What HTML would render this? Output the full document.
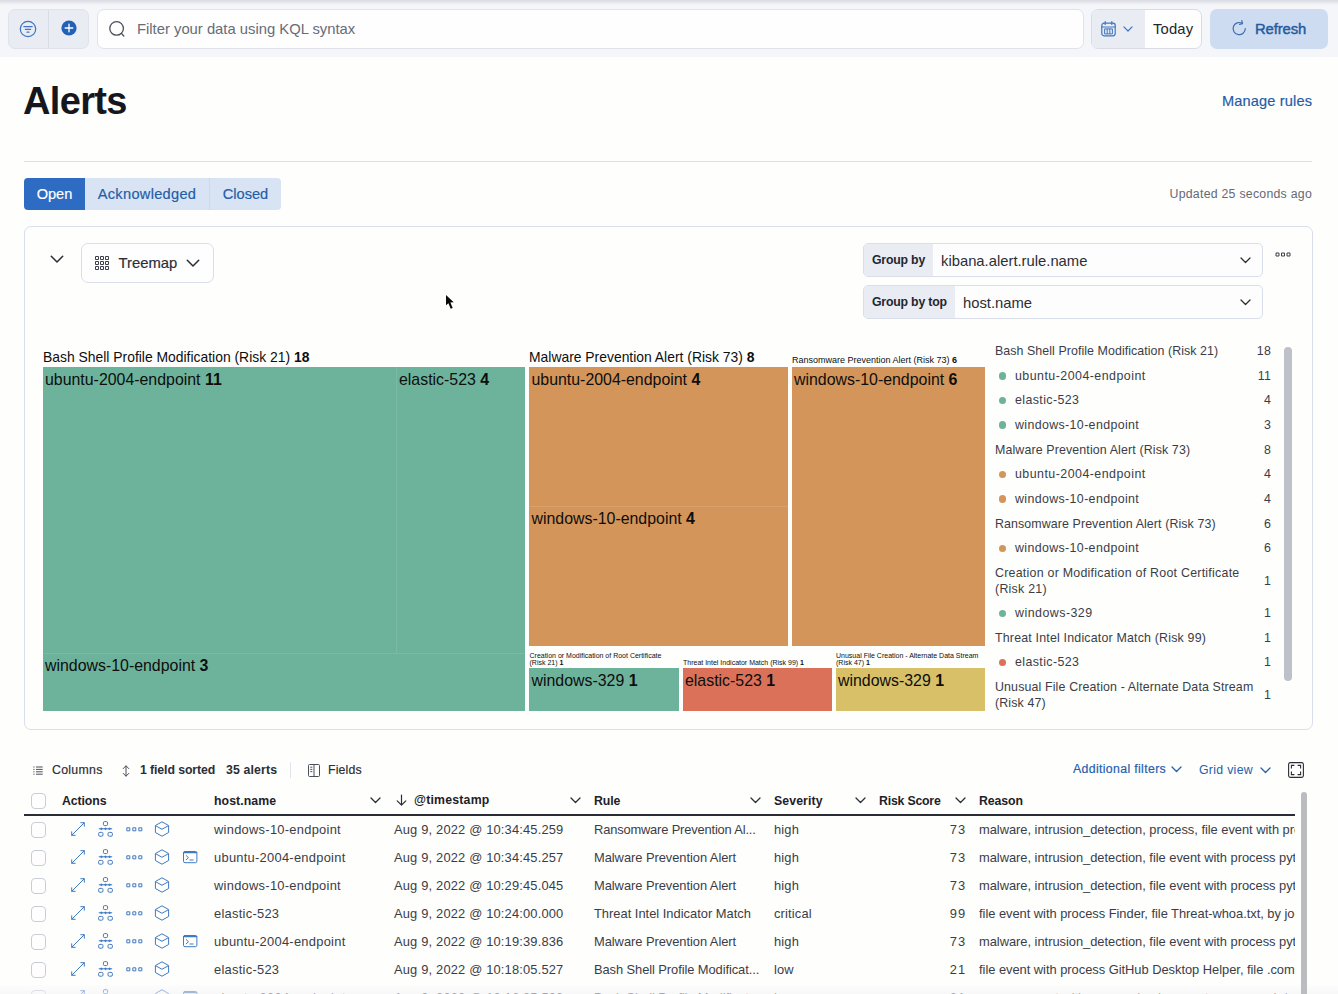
<!DOCTYPE html>
<html lang="en">
<head>
<meta charset="utf-8">
<title>Alerts</title>
<style>
*{box-sizing:border-box;margin:0;padding:0}
html,body{width:1338px;height:994px;overflow:hidden;background:#fefefd}
body{font-family:"Liberation Sans",Arial,sans-serif;color:#343741;position:relative;font-size:13px}
.a{position:absolute;white-space:nowrap}
svg{position:absolute;overflow:visible}
b{font-weight:bold}
#topbar{left:0;top:0;width:1338px;height:57px;background:#f5f6fa}
#topshadow{left:0;top:0;width:1338px;height:5px;background:linear-gradient(#d9dae2,#f5f6fa)}
.btngrp{left:8px;top:9px;width:81px;height:40px;background:#e9ecf2;border:1px solid #dfe3ec;border-radius:7px}
#search{left:97px;top:9px;width:986.5px;height:40px;background:#fefefe;border:1px solid #dfe3ec;border-radius:7px}
#date{left:1091px;top:9px;width:111px;height:40px;background:#fefefe;border:1px solid #d7dce7;border-radius:7px;overflow:hidden}
#date .l{left:0;top:0;width:52.5px;height:40px;background:#e9ecf2}
#refresh{left:1210px;top:9px;width:118px;height:40px;background:#cddcf1;border-radius:7px}
h1{font-size:38px;font-weight:bold;color:#16171c;letter-spacing:-.65px}
.blue{color:#1f5ca8}
.hr{background:#dadfe9;height:1px}
.tab{top:178px;height:32px;line-height:32px;font-size:14.6px;text-align:center;background:#d8e4f4;color:#235da6}
#panel{left:24px;top:226px;width:1289px;height:504px;border:1px solid #d9deea;border-radius:7px;background:#fefefd}
.med{-webkit-text-stroke:.18px currentColor}
.gb{width:400px;height:34px;border:1px solid #d9deea;border-radius:5px;background:#fdfdfe;overflow:hidden}
.gb .lab{left:0;top:0;height:32px;line-height:32.5px;background:#e9ecf2;font-size:12.3px;font-weight:bold;color:#24262d;padding-left:8px;letter-spacing:-.2px}
.gb .val{top:0;line-height:35px;font-size:14.8px;color:#2b2e36;letter-spacing:0}
.tg{font-size:13.9px;color:#0e0e0e;line-height:18px}
.tl{font-size:15.9px;color:#0e0e0e;line-height:20px}
.ts{font-size:7px;color:#0e0e0e;line-height:7px}
.lg{left:995px;width:277px;font-size:12.4px;line-height:15.7px;color:#3a3d47;letter-spacing:.22px}
.lg i{position:absolute;right:1px;top:0;font-style:normal;letter-spacing:.22px}
.lg.s{padding-left:20px}
.lg u{position:absolute;left:3.7px;top:3.5px;width:7.6px;height:7.6px;border-radius:50%}
.tb{top:763px;font-size:12.3px;color:#2b2e36;line-height:15px}
.th{font-size:12.3px;font-weight:bold;color:#1f2128;line-height:15px;letter-spacing:-.1px}
.cb{left:30.5px;width:15.5px;height:16px;border:1px solid #c9cdd8;border-radius:4px;background:#fefefe}
.td{font-size:12.9px;line-height:27px;color:#3a3d47;letter-spacing:.16px}
</style>
</head>
<body>
<div class="a" id="topbar"></div><div class="a" id="topshadow"></div><div class="a btngrp"></div>
<div class="a" style="left:48px;top:10px;width:1px;height:38px;background:#d9dde7"></div>
<svg style="left:19px;top:20px" width="18" height="18" viewBox="0 0 18 18" fill="none" stroke="#3f76bf" stroke-width="1.2" stroke-linecap="round"><circle cx="9" cy="9" r="7.7"/><path d="M4.8 6.600h8.400M6.400 9.400h5.200M8 12.200h2"/></svg>
<svg style="left:60.500px;top:20px" width="16" height="16" viewBox="0 0 16 16"><circle cx="8" cy="8" r="7.600" fill="#2261b8"/><path d="M8 4.200v7.600M4.200 8h7.600" stroke="#fff" stroke-width="1.300" stroke-linecap="round"/></svg>
<div class="a" id="search"></div>
<svg style="left:107.700px;top:19.500px" width="18" height="18" viewBox="0 0 18 18" fill="none" stroke="#4a4f5a" stroke-width="1.300" stroke-linecap="round"><circle cx="8.600" cy="8.400" r="6.800"/><path d="M13.400 13.400l2.400 2.600"/></svg>
<div class="a" style="left:137px;top:21px;font-size:14.8px;color:#666c78;letter-spacing:0">Filter your data using KQL syntax</div>
<div class="a" id="date"><div class="a l"></div></div>
<svg style="left:1101px;top:21px" width="15" height="16" viewBox="0 0 15 16" fill="none" stroke="#3f76bf" stroke-width="1.200"><rect x=".8" y="2.200" width="13.400" height="12.600" rx="2.200"/><path d="M.8 6h13.400M4.200 .6v2.800M10.800 .6v2.800" stroke-linecap="round"/><path d="M3.600 7.900h7.800v5H3.600zM6.200 7.900v5M8.800 7.900v5" stroke-width="1"/></svg>
<svg style="left:1123px;top:26px" width="10" height="6.4" viewBox="0 0 11 7" fill="none" stroke="#3f76bf" stroke-width="1.3" stroke-linecap="round" stroke-linejoin="round"><path d="M1 1l4.5 4.500L10 1"/></svg>
<div class="a" style="left:1153px;top:21px;font-size:14.8px;color:#24262d;letter-spacing:.15px">Today</div>
<div class="a" id="refresh"></div>
<svg style="left:1232px;top:20px" width="15" height="16" viewBox="0 0 15 16" fill="none" stroke="#3e6fae" stroke-width="1.200" stroke-linecap="round" stroke-linejoin="round"><path d="M13.300 8.600a6.100 6.100 0 1 1-3.100-5.300"/><path d="M9.800 .6l.7 3-3 .7"/></svg>
<div class="a" style="left:1255px;top:21px;font-size:14.8px;-webkit-text-stroke:.45px #255b9f;letter-spacing:-.1px;color:#255b9f">Refresh</div>
<h1 class="a" style="left:23px;top:80px">Alerts</h1>
<div class="a blue med" style="left:1222px;top:93px;font-size:14.6px;letter-spacing:.15px">Manage rules</div>
<div class="a hr" style="left:24px;top:161px;width:1288px"></div>
<div class="a tab med" style="left:24px;width:61px;background:#2d6cc2;color:#fff;border-radius:4px 0 0 4px">Open</div>
<div class="a tab med" style="left:85px;width:125px;border-right:1px solid #cbd9ee;letter-spacing:.3px">Acknowledged</div>
<div class="a tab med" style="left:210px;width:71px;border-radius:0 4px 4px 0">Closed</div>
<div class="a" style="right:26px;top:187px;font-size:12.3px;color:#646a76;letter-spacing:.26px">Updated 25 seconds ago</div>
<div class="a" id="panel"></div>
<svg style="left:50px;top:255px" width="14" height="8.9" viewBox="0 0 11 7" fill="none" stroke="#2a2d35" stroke-width="1.2" stroke-linecap="round" stroke-linejoin="round"><path d="M1 1l4.5 4.500L10 1"/></svg>
<div class="a" style="left:81px;top:243px;width:133px;height:40px;border:1px solid #d9deea;border-radius:7px;background:#fefefe"></div>
<svg style="left:95px;top:256px" width="14" height="14" viewBox="0 0 14 14" fill="none" stroke="#3c404a" stroke-width="1"><path d="M.5 .5h3v3h-3zM5.500 .5h3v3h-3zM10.500 .5h3v3h-3zM.5 5.500h3v3h-3zM5.500 5.500h3v3h-3zM10.500 5.500h3v3h-3zM.5 10.500h3v3h-3zM5.500 10.500h3v3h-3zM10.500 10.500h3v3h-3z"/></svg>
<div class="a med" style="left:118.500px;top:255px;font-size:14.8px;color:#2b2e36;letter-spacing:0">Treemap</div>
<svg style="left:186px;top:259px" width="14" height="8.9" viewBox="0 0 11 7" fill="none" stroke="#2a2d35" stroke-width="1.2" stroke-linecap="round" stroke-linejoin="round"><path d="M1 1l4.5 4.500L10 1"/></svg>
<div class="a gb" style="left:863px;top:243px"><div class="a lab" style="width:69px">Group by</div><div class="a val" style="left:77px">kibana.alert.rule.name</div></div>
<div class="a gb" style="left:863px;top:285px"><div class="a lab" style="width:91px">Group by top</div><div class="a val" style="left:99px">host.name</div></div>
<svg style="left:1240px;top:257px" width="11" height="7.0" viewBox="0 0 11 7" fill="none" stroke="#2a2d35" stroke-width="1.3" stroke-linecap="round" stroke-linejoin="round"><path d="M1 1l4.5 4.500L10 1"/></svg>
<svg style="left:1240px;top:299px" width="11" height="7.0" viewBox="0 0 11 7" fill="none" stroke="#2a2d35" stroke-width="1.3" stroke-linecap="round" stroke-linejoin="round"><path d="M1 1l4.5 4.500L10 1"/></svg>
<svg style="left:1275px;top:252px" width="16" height="6" viewBox="0 0 16 6" fill="none" stroke="#3c404a" stroke-width="1"><path d="M1 1h3v3H1zM6.500 1h3v3h-3zM12 1h3v3h-3z"/></svg>
<svg style="left:444px;top:292.800px" width="14" height="20" viewBox="0 0 14 20"><path d="M2 2v10.200l2.400-2 2.300 5.500 2-.8-2.300-5.400 3.300-.2z" fill="#0a0a0a" stroke="#fff" stroke-width="1.400" stroke-linejoin="round" paint-order="stroke"/></svg>
<div class="a" style="left:43px;top:367px;width:482.4px;height:344px;background:#6db39c"></div>
<div class="a" style="left:396px;top:367px;width:1px;height:286px;background:#7bbba6"></div>
<div class="a" style="left:43px;top:653px;width:482.4px;height:1px;background:#7bbba6"></div>
<div class="a" style="left:529.2px;top:367px;width:258.8px;height:279px;background:#d39559"></div>
<div class="a" style="left:529.2px;top:505.5px;width:258.8px;height:1px;background:#d9a26d"></div>
<div class="a" style="left:792px;top:367px;width:193px;height:279px;background:#d39559"></div>
<div class="a" style="left:529.2px;top:668.3px;width:149.6px;height:42.7px;background:#6db39c"></div>
<div class="a" style="left:682.8px;top:668.3px;width:149.2px;height:42.7px;background:#da7158"></div>
<div class="a" style="left:836px;top:668.3px;width:149px;height:42.7px;background:#d7c067"></div>
<div class="a tg" style="left:43px;top:348px">Bash Shell Profile Modification (Risk 21) <b>18</b></div>
<div class="a tg" style="left:529px;top:348px">Malware Prevention Alert (Risk 73) <b>8</b></div>
<div class="a tg" style="left:792px;top:351px;font-size:9px">Ransomware Prevention Alert (Risk 73) <b>6</b></div>
<div class="a tl" style="left:45px;top:369.8px">ubuntu-2004-endpoint <b>11</b></div>
<div class="a tl" style="left:399px;top:369.8px">elastic-523 <b>4</b></div>
<div class="a tl" style="left:45px;top:655.9px">windows-10-endpoint <b>3</b></div>
<div class="a tl" style="left:531.5px;top:369.8px">ubuntu-2004-endpoint <b>4</b></div>
<div class="a tl" style="left:531.5px;top:508.6px">windows-10-endpoint <b>4</b></div>
<div class="a tl" style="left:794px;top:369.8px">windows-10-endpoint <b>6</b></div>
<div class="a tl" style="left:531.5px;top:671.1px">windows-329 <b>1</b></div>
<div class="a tl" style="left:685px;top:671.1px">elastic-523 <b>1</b></div>
<div class="a tl" style="left:838px;top:671.1px">windows-329 <b>1</b></div>
<div class="a ts" style="left:529.5px;top:652.1px">Creation or Modification of Root Certificate<br>(Risk 21) <b>1</b></div>
<div class="a ts" style="left:683px;top:658.7px">Threat Intel Indicator Match (Risk 99) <b>1</b></div>
<div class="a ts" style="left:836px;top:652.1px">Unusual File Creation - Alternate Data Stream<br>(Risk 47) <b>1</b></div>
<div class="a lg" style="top:343.9px;letter-spacing:0.07px">Bash Shell Profile Modification (Risk 21)<i>18</i></div>
<div class="a lg s" style="top:368.9px;letter-spacing:0.47px"><u style="background:#6db39c"></u>ubuntu-2004-endpoint<i>11</i></div>
<div class="a lg s" style="top:393.4px;letter-spacing:0.4px"><u style="background:#6db39c"></u>elastic-523<i>4</i></div>
<div class="a lg s" style="top:417.9px;letter-spacing:0.37px"><u style="background:#6db39c"></u>windows-10-endpoint<i>3</i></div>
<div class="a lg" style="top:442.9px;letter-spacing:0.13px">Malware Prevention Alert (Risk 73)<i>8</i></div>
<div class="a lg s" style="top:467.4px;letter-spacing:0.47px"><u style="background:#d39559"></u>ubuntu-2004-endpoint<i>4</i></div>
<div class="a lg s" style="top:491.9px;letter-spacing:0.37px"><u style="background:#d39559"></u>windows-10-endpoint<i>4</i></div>
<div class="a lg" style="top:516.9px;letter-spacing:0.1px">Ransomware Prevention Alert (Risk 73)<i>6</i></div>
<div class="a lg s" style="top:541.4px;letter-spacing:0.37px"><u style="background:#d39559"></u>windows-10-endpoint<i>6</i></div>
<div class="a lg" style="top:565.9px;letter-spacing:0.25px">Creation or Modification of Root Certificate<br>(Risk 21)<i style="top:8px">1</i></div>
<div class="a lg s" style="top:606.4px;letter-spacing:0.48px"><u style="background:#6db39c"></u>windows-329<i>1</i></div>
<div class="a lg" style="top:630.9px;letter-spacing:0.19px">Threat Intel Indicator Match (Risk 99)<i>1</i></div>
<div class="a lg s" style="top:655.4px;letter-spacing:0.4px"><u style="background:#da7158"></u>elastic-523<i>1</i></div>
<div class="a lg" style="top:679.9px;letter-spacing:0.14px">Unusual File Creation - Alternate Data Stream<br>(Risk 47)<i style="top:8px">1</i></div>
<div class="a" style="left:1283.5px;top:347px;width:8px;height:334px;background:#bfc1c9;border-radius:4px"></div>
<svg style="left:33px;top:765.500px" width="10" height="9" viewBox="0 0 10 9" fill="none" stroke="#4a4f5a" stroke-width="1"><path d="M.3 1h1.200M.3 3.400h1.200M.3 5.800h1.200M.3 8.200h1.200M3 1h6.700M3 3.400h6.700M3 5.800h6.700M3 8.200h6.700"/></svg>
<div class="a tb med" style="left:52px;letter-spacing:.3px">Columns</div>
<svg style="left:122px;top:764.500px" width="8" height="12" viewBox="0 0 8 12" fill="none" stroke="#4a4f5a" stroke-width="1" stroke-linecap="round" stroke-linejoin="round"><path d="M4 1v10M1.200 3.600L4 .8l2.800 2.800M1.200 8.400L4 11.200l2.800-2.800"/></svg>
<div class="a tb" style="left:140px;font-weight:bold;letter-spacing:-.1px">1 field sorted</div>
<div class="a tb" style="left:226px;font-weight:bold;letter-spacing:.15px">35 alerts</div>
<div class="a" style="left:290px;top:762px;width:1px;height:16px;background:#e1e4ec"></div>
<svg style="left:308px;top:763.500px" width="12" height="13" viewBox="0 0 12 13" fill="none" stroke="#4a4f5a" stroke-width="1"><rect x=".5" y=".5" width="11" height="12" rx="1"/><path d="M6 .5v12M2.300 3.200h2M2.300 5.400h2M2.300 7.600h2"/></svg>
<div class="a tb med" style="left:328px;letter-spacing:.15px">Fields</div>
<div class="a tb med" style="left:1073px;top:762px;color:#2460ad;letter-spacing:.35px">Additional filters</div>
<svg style="left:1171px;top:766px" width="11" height="7.0" viewBox="0 0 11 7" fill="none" stroke="#2460ad" stroke-width="1.3" stroke-linecap="round" stroke-linejoin="round"><path d="M1 1l4.5 4.500L10 1"/></svg>
<div class="a tb" style="left:1199px;top:763px;color:#2460ad;letter-spacing:.3px">Grid view</div>
<svg style="left:1260px;top:766.5px" width="11" height="7.0" viewBox="0 0 11 7" fill="none" stroke="#2460ad" stroke-width="1.3" stroke-linecap="round" stroke-linejoin="round"><path d="M1 1l4.5 4.500L10 1"/></svg>
<svg style="left:1288px;top:762px" width="16" height="16" viewBox="0 0 16 16" fill="none" stroke="#2a2d35" stroke-width="1.100"><rect x=".6" y=".6" width="14.800" height="14.800" rx="1.800"/><path d="M3.400 6.400v-3h3M9.600 3.400h3v3M12.600 9.600v3h-3M6.400 12.600h-3v-3"/></svg>
<div class="a cb" style="top:792.500px"></div>
<div class="a th" style="left:62px;top:793.5px;letter-spacing:-0.1px">Actions</div>
<div class="a th" style="left:214px;top:793.5px;letter-spacing:0.08px">host.name</div>
<div class="a th" style="left:414px;top:793px;letter-spacing:0.2px">@timestamp</div>
<div class="a th" style="left:594px;top:793.5px;letter-spacing:-0.1px">Rule</div>
<div class="a th" style="left:774px;top:793.5px;letter-spacing:0.1px">Severity</div>
<div class="a th" style="left:879px;top:793.5px;letter-spacing:-0.2px">Risk Score</div>
<div class="a th" style="left:979px;top:793.5px;letter-spacing:-0.1px">Reason</div>
<svg style="left:370px;top:797px" width="11" height="7.0" viewBox="0 0 11 7" fill="none" stroke="#2a2d35" stroke-width="1.3" stroke-linecap="round" stroke-linejoin="round"><path d="M1 1l4.5 4.500L10 1"/></svg>
<svg style="left:570px;top:797px" width="11" height="7.0" viewBox="0 0 11 7" fill="none" stroke="#2a2d35" stroke-width="1.3" stroke-linecap="round" stroke-linejoin="round"><path d="M1 1l4.5 4.500L10 1"/></svg>
<svg style="left:750px;top:797px" width="11" height="7.0" viewBox="0 0 11 7" fill="none" stroke="#2a2d35" stroke-width="1.3" stroke-linecap="round" stroke-linejoin="round"><path d="M1 1l4.5 4.500L10 1"/></svg>
<svg style="left:855px;top:797px" width="11" height="7.0" viewBox="0 0 11 7" fill="none" stroke="#2a2d35" stroke-width="1.3" stroke-linecap="round" stroke-linejoin="round"><path d="M1 1l4.5 4.500L10 1"/></svg>
<svg style="left:955px;top:797px" width="11" height="7.0" viewBox="0 0 11 7" fill="none" stroke="#2a2d35" stroke-width="1.3" stroke-linecap="round" stroke-linejoin="round"><path d="M1 1l4.5 4.500L10 1"/></svg>
<svg style="left:396px;top:794px" width="11" height="12" viewBox="0 0 11 12" fill="none" stroke="#2a2d35" stroke-width="1.200" stroke-linecap="round" stroke-linejoin="round"><path d="M5.500 1v10M1.200 6.800l4.300 4.300 4.300-4.300"/></svg>
<div class="a" style="left:24px;top:814px;width:1271px;height:2px;background:#2b2d36"></div>
<div class="a" style="left:24px;top:816px;width:1271px;height:178px;overflow:hidden">
<div class="a cb" style="left:6.500px;top:6px"></div>
<svg style="left:46.800px;top:6px" width="14" height="14" viewBox="0 0 14 14" fill="none" stroke="#4079c1" stroke-width="1" stroke-linecap="round" stroke-linejoin="round"><path d="M.8 13.200L13.200 .8M9.800 .7h3.500v3.500M.7 9.800v3.500h3.500"/></svg>
<svg style="left:73.800px;top:4.8px" width="15" height="16" viewBox="0 0 15 16" fill="none" stroke="#4079c1" stroke-width="1"><rect x="5.400" y=".6" width="4.200" height="4" rx="1.300"/><path d="M.8 7.800h13.400"/><path d="M3.400 6.700l1.100 1.100-1.100 1.100-1.100-1.100zM7.500 6.700l1.100 1.100-1.100 1.100-1.100-1.100zM11.600 6.700l1.100 1.100-1.100 1.100-1.100-1.100z" fill="#4079c1" stroke-width=".6"/><rect x=".6" y="11.400" width="4.400" height="3.800" rx="1.300"/><rect x="10" y="11.400" width="4.400" height="3.800" rx="1.300"/></svg>
<svg style="left:101.800px;top:11.3px" width="17" height="5" viewBox="0 0 17 5" fill="none" stroke="#4079c1" stroke-width="1"><path d="M.8 .8h3v3H.8zM6.800 .8h3v3H6.800zM12.800 .8h3v3H12.800z"/></svg>
<svg style="left:130px;top:5px" width="16" height="16" viewBox="0 0 16 16" fill="none" stroke="#4079c1" stroke-width="1" stroke-linejoin="round"><path d="M8 .8l6.600 3.700v7L8 15.200 1.400 11.500v-7z"/><path d="M1.600 4.700L8 8.300l6.400-3.600"/></svg>
<div class="a td" style="left:190px;top:0px;letter-spacing:.27px">windows-10-endpoint</div>
<div class="a td" style="left:370px;top:0px;letter-spacing:.17px">Aug 9, 2022 @ 10:34:45.259</div>
<div class="a td" style="left:570px;top:0px;letter-spacing:-0.17px">Ransomware Prevention Al...</div>
<div class="a td" style="left:750px;top:0px">high</div>
<div class="a td" style="left:855px;top:0px;width:87px;text-align:right;letter-spacing:.9px">73</div>
<div class="a td" style="left:955px;top:0px;letter-spacing:-.03px">malware, intrusion_detection, process, file event with process mimikatz.exe, by user on windows-10-endpoint created high alert</div>
<div class="a cb" style="left:6.500px;top:34px"></div>
<svg style="left:46.800px;top:34px" width="14" height="14" viewBox="0 0 14 14" fill="none" stroke="#4079c1" stroke-width="1" stroke-linecap="round" stroke-linejoin="round"><path d="M.8 13.200L13.200 .8M9.800 .7h3.500v3.500M.7 9.800v3.500h3.500"/></svg>
<svg style="left:73.800px;top:32.8px" width="15" height="16" viewBox="0 0 15 16" fill="none" stroke="#4079c1" stroke-width="1"><rect x="5.400" y=".6" width="4.200" height="4" rx="1.300"/><path d="M.8 7.800h13.400"/><path d="M3.400 6.700l1.100 1.100-1.100 1.100-1.100-1.100zM7.500 6.700l1.100 1.100-1.100 1.100-1.100-1.100zM11.600 6.700l1.100 1.100-1.100 1.100-1.100-1.100z" fill="#4079c1" stroke-width=".6"/><rect x=".6" y="11.400" width="4.400" height="3.800" rx="1.300"/><rect x="10" y="11.400" width="4.400" height="3.800" rx="1.300"/></svg>
<svg style="left:101.800px;top:39.3px" width="17" height="5" viewBox="0 0 17 5" fill="none" stroke="#4079c1" stroke-width="1"><path d="M.8 .8h3v3H.8zM6.800 .8h3v3H6.800zM12.800 .8h3v3H12.800z"/></svg>
<svg style="left:130px;top:33px" width="16" height="16" viewBox="0 0 16 16" fill="none" stroke="#4079c1" stroke-width="1" stroke-linejoin="round"><path d="M8 .8l6.600 3.700v7L8 15.200 1.400 11.500v-7z"/><path d="M1.600 4.700L8 8.300l6.400-3.600"/></svg>
<svg style="left:158.800px;top:35.4px" width="14.400" height="12.200" viewBox="0 0 14.400 12.200" fill="none" stroke="#4079c1" stroke-width="1" stroke-linecap="round" stroke-linejoin="round"><rect x=".5" y=".5" width="13.400" height="11.200" rx="1.500"/><path d="M.8 1.500h12.800" stroke-width="1.400"/><path d="M3.200 4.600l2.300 2.100-2.300 2.100M6.900 9h3.200"/></svg>
<div class="a td" style="left:190px;top:28px;letter-spacing:.27px">ubuntu-2004-endpoint</div>
<div class="a td" style="left:370px;top:28px;letter-spacing:.17px">Aug 9, 2022 @ 10:34:45.257</div>
<div class="a td" style="left:570px;top:28px;letter-spacing:-0.05px">Malware Prevention Alert</div>
<div class="a td" style="left:750px;top:28px">high</div>
<div class="a td" style="left:855px;top:28px;width:87px;text-align:right;letter-spacing:.9px">73</div>
<div class="a td" style="left:955px;top:28px;letter-spacing:-.03px">malware, intrusion_detection, file event with process python3, file eicar.com, by root on ubuntu-2004-endpoint</div>
<div class="a cb" style="left:6.500px;top:62px"></div>
<svg style="left:46.800px;top:62px" width="14" height="14" viewBox="0 0 14 14" fill="none" stroke="#4079c1" stroke-width="1" stroke-linecap="round" stroke-linejoin="round"><path d="M.8 13.200L13.200 .8M9.800 .7h3.500v3.500M.7 9.800v3.500h3.500"/></svg>
<svg style="left:73.800px;top:60.8px" width="15" height="16" viewBox="0 0 15 16" fill="none" stroke="#4079c1" stroke-width="1"><rect x="5.400" y=".6" width="4.200" height="4" rx="1.300"/><path d="M.8 7.800h13.400"/><path d="M3.400 6.700l1.100 1.100-1.100 1.100-1.100-1.100zM7.500 6.700l1.100 1.100-1.100 1.100-1.100-1.100zM11.600 6.700l1.100 1.100-1.100 1.100-1.100-1.100z" fill="#4079c1" stroke-width=".6"/><rect x=".6" y="11.400" width="4.400" height="3.800" rx="1.300"/><rect x="10" y="11.400" width="4.400" height="3.800" rx="1.300"/></svg>
<svg style="left:101.800px;top:67.3px" width="17" height="5" viewBox="0 0 17 5" fill="none" stroke="#4079c1" stroke-width="1"><path d="M.8 .8h3v3H.8zM6.800 .8h3v3H6.800zM12.800 .8h3v3H12.800z"/></svg>
<svg style="left:130px;top:61px" width="16" height="16" viewBox="0 0 16 16" fill="none" stroke="#4079c1" stroke-width="1" stroke-linejoin="round"><path d="M8 .8l6.600 3.700v7L8 15.200 1.400 11.500v-7z"/><path d="M1.600 4.700L8 8.300l6.400-3.600"/></svg>
<div class="a td" style="left:190px;top:56px;letter-spacing:.27px">windows-10-endpoint</div>
<div class="a td" style="left:370px;top:56px;letter-spacing:.17px">Aug 9, 2022 @ 10:29:45.045</div>
<div class="a td" style="left:570px;top:56px;letter-spacing:-0.05px">Malware Prevention Alert</div>
<div class="a td" style="left:750px;top:56px">high</div>
<div class="a td" style="left:855px;top:56px;width:87px;text-align:right;letter-spacing:.9px">73</div>
<div class="a td" style="left:955px;top:56px;letter-spacing:-.03px">malware, intrusion_detection, file event with process python.exe, file eicar.com, by user on windows-10-endpoint</div>
<div class="a cb" style="left:6.500px;top:90px"></div>
<svg style="left:46.800px;top:90px" width="14" height="14" viewBox="0 0 14 14" fill="none" stroke="#4079c1" stroke-width="1" stroke-linecap="round" stroke-linejoin="round"><path d="M.8 13.200L13.200 .8M9.800 .7h3.500v3.500M.7 9.800v3.500h3.500"/></svg>
<svg style="left:73.800px;top:88.8px" width="15" height="16" viewBox="0 0 15 16" fill="none" stroke="#4079c1" stroke-width="1"><rect x="5.400" y=".6" width="4.200" height="4" rx="1.300"/><path d="M.8 7.800h13.400"/><path d="M3.400 6.700l1.100 1.100-1.100 1.100-1.100-1.100zM7.500 6.700l1.100 1.100-1.100 1.100-1.100-1.100zM11.600 6.700l1.100 1.100-1.100 1.100-1.100-1.100z" fill="#4079c1" stroke-width=".6"/><rect x=".6" y="11.400" width="4.400" height="3.800" rx="1.300"/><rect x="10" y="11.400" width="4.400" height="3.800" rx="1.300"/></svg>
<svg style="left:101.800px;top:95.3px" width="17" height="5" viewBox="0 0 17 5" fill="none" stroke="#4079c1" stroke-width="1"><path d="M.8 .8h3v3H.8zM6.800 .8h3v3H6.800zM12.800 .8h3v3H12.800z"/></svg>
<svg style="left:130px;top:89px" width="16" height="16" viewBox="0 0 16 16" fill="none" stroke="#4079c1" stroke-width="1" stroke-linejoin="round"><path d="M8 .8l6.600 3.700v7L8 15.200 1.400 11.500v-7z"/><path d="M1.600 4.700L8 8.300l6.400-3.600"/></svg>
<div class="a td" style="left:190px;top:84px;letter-spacing:.27px">elastic-523</div>
<div class="a td" style="left:370px;top:84px;letter-spacing:.17px">Aug 9, 2022 @ 10:24:00.000</div>
<div class="a td" style="left:570px;top:84px;letter-spacing:0px">Threat Intel Indicator Match</div>
<div class="a td" style="left:750px;top:84px">critical</div>
<div class="a td" style="left:855px;top:84px;width:87px;text-align:right;letter-spacing:.9px">99</div>
<div class="a td" style="left:955px;top:84px;letter-spacing:-.03px">file event with process Finder, file Threat-whoa.txt, by joe on elastic-523 created critical alert</div>
<div class="a cb" style="left:6.500px;top:118px"></div>
<svg style="left:46.800px;top:118px" width="14" height="14" viewBox="0 0 14 14" fill="none" stroke="#4079c1" stroke-width="1" stroke-linecap="round" stroke-linejoin="round"><path d="M.8 13.200L13.200 .8M9.800 .7h3.500v3.500M.7 9.800v3.500h3.500"/></svg>
<svg style="left:73.800px;top:116.8px" width="15" height="16" viewBox="0 0 15 16" fill="none" stroke="#4079c1" stroke-width="1"><rect x="5.400" y=".6" width="4.200" height="4" rx="1.300"/><path d="M.8 7.800h13.400"/><path d="M3.400 6.700l1.100 1.100-1.100 1.100-1.100-1.100zM7.500 6.700l1.100 1.100-1.100 1.100-1.100-1.100zM11.600 6.700l1.100 1.100-1.100 1.100-1.100-1.100z" fill="#4079c1" stroke-width=".6"/><rect x=".6" y="11.400" width="4.400" height="3.800" rx="1.300"/><rect x="10" y="11.400" width="4.400" height="3.800" rx="1.300"/></svg>
<svg style="left:101.800px;top:123.3px" width="17" height="5" viewBox="0 0 17 5" fill="none" stroke="#4079c1" stroke-width="1"><path d="M.8 .8h3v3H.8zM6.800 .8h3v3H6.800zM12.800 .8h3v3H12.800z"/></svg>
<svg style="left:130px;top:117px" width="16" height="16" viewBox="0 0 16 16" fill="none" stroke="#4079c1" stroke-width="1" stroke-linejoin="round"><path d="M8 .8l6.600 3.700v7L8 15.200 1.400 11.500v-7z"/><path d="M1.600 4.700L8 8.300l6.400-3.600"/></svg>
<svg style="left:158.800px;top:119.4px" width="14.400" height="12.200" viewBox="0 0 14.400 12.200" fill="none" stroke="#4079c1" stroke-width="1" stroke-linecap="round" stroke-linejoin="round"><rect x=".5" y=".5" width="13.400" height="11.200" rx="1.500"/><path d="M.8 1.500h12.800" stroke-width="1.400"/><path d="M3.200 4.600l2.300 2.100-2.300 2.100M6.900 9h3.200"/></svg>
<div class="a td" style="left:190px;top:112px;letter-spacing:.27px">ubuntu-2004-endpoint</div>
<div class="a td" style="left:370px;top:112px;letter-spacing:.17px">Aug 9, 2022 @ 10:19:39.836</div>
<div class="a td" style="left:570px;top:112px;letter-spacing:-0.05px">Malware Prevention Alert</div>
<div class="a td" style="left:750px;top:112px">high</div>
<div class="a td" style="left:855px;top:112px;width:87px;text-align:right;letter-spacing:.9px">73</div>
<div class="a td" style="left:955px;top:112px;letter-spacing:-.03px">malware, intrusion_detection, file event with process python3, file eicar.com, by root on ubuntu-2004-endpoint</div>
<div class="a cb" style="left:6.500px;top:146px"></div>
<svg style="left:46.800px;top:146px" width="14" height="14" viewBox="0 0 14 14" fill="none" stroke="#4079c1" stroke-width="1" stroke-linecap="round" stroke-linejoin="round"><path d="M.8 13.200L13.200 .8M9.800 .7h3.500v3.500M.7 9.800v3.500h3.500"/></svg>
<svg style="left:73.800px;top:144.8px" width="15" height="16" viewBox="0 0 15 16" fill="none" stroke="#4079c1" stroke-width="1"><rect x="5.400" y=".6" width="4.200" height="4" rx="1.300"/><path d="M.8 7.800h13.400"/><path d="M3.400 6.700l1.100 1.100-1.100 1.100-1.100-1.100zM7.500 6.700l1.100 1.100-1.100 1.100-1.100-1.100zM11.600 6.700l1.100 1.100-1.100 1.100-1.100-1.100z" fill="#4079c1" stroke-width=".6"/><rect x=".6" y="11.400" width="4.400" height="3.800" rx="1.300"/><rect x="10" y="11.400" width="4.400" height="3.800" rx="1.300"/></svg>
<svg style="left:101.800px;top:151.3px" width="17" height="5" viewBox="0 0 17 5" fill="none" stroke="#4079c1" stroke-width="1"><path d="M.8 .8h3v3H.8zM6.800 .8h3v3H6.800zM12.800 .8h3v3H12.800z"/></svg>
<svg style="left:130px;top:145px" width="16" height="16" viewBox="0 0 16 16" fill="none" stroke="#4079c1" stroke-width="1" stroke-linejoin="round"><path d="M8 .8l6.600 3.700v7L8 15.200 1.400 11.500v-7z"/><path d="M1.600 4.700L8 8.300l6.400-3.600"/></svg>
<div class="a td" style="left:190px;top:140px;letter-spacing:.27px">elastic-523</div>
<div class="a td" style="left:370px;top:140px;letter-spacing:.17px">Aug 9, 2022 @ 10:18:05.527</div>
<div class="a td" style="left:570px;top:140px;letter-spacing:-0.08px">Bash Shell Profile Modificat...</div>
<div class="a td" style="left:750px;top:140px">low</div>
<div class="a td" style="left:855px;top:140px;width:87px;text-align:right;letter-spacing:.9px">21</div>
<div class="a td" style="left:955px;top:140px;letter-spacing:-.03px">file event with process GitHub Desktop Helper, file .command_history, by joe on elastic-523 created low alert</div>
<div class="a cb" style="left:6.500px;top:174px"></div>
<svg style="left:46.800px;top:174px" width="14" height="14" viewBox="0 0 14 14" fill="none" stroke="#4079c1" stroke-width="1" stroke-linecap="round" stroke-linejoin="round"><path d="M.8 13.200L13.200 .8M9.800 .7h3.500v3.500M.7 9.800v3.500h3.500"/></svg>
<svg style="left:73.800px;top:172.8px" width="15" height="16" viewBox="0 0 15 16" fill="none" stroke="#4079c1" stroke-width="1"><rect x="5.400" y=".6" width="4.200" height="4" rx="1.300"/><path d="M.8 7.800h13.400"/><path d="M3.400 6.700l1.100 1.100-1.100 1.100-1.100-1.100zM7.500 6.700l1.100 1.100-1.100 1.100-1.100-1.100zM11.600 6.700l1.100 1.100-1.100 1.100-1.100-1.100z" fill="#4079c1" stroke-width=".6"/><rect x=".6" y="11.400" width="4.400" height="3.800" rx="1.300"/><rect x="10" y="11.400" width="4.400" height="3.800" rx="1.300"/></svg>
<svg style="left:101.800px;top:179.3px" width="17" height="5" viewBox="0 0 17 5" fill="none" stroke="#4079c1" stroke-width="1"><path d="M.8 .8h3v3H.8zM6.800 .8h3v3H6.800zM12.800 .8h3v3H12.800z"/></svg>
<svg style="left:130px;top:173px" width="16" height="16" viewBox="0 0 16 16" fill="none" stroke="#4079c1" stroke-width="1" stroke-linejoin="round"><path d="M8 .8l6.600 3.700v7L8 15.200 1.400 11.500v-7z"/><path d="M1.600 4.700L8 8.300l6.400-3.600"/></svg>
<svg style="left:158.800px;top:175.4px" width="14.400" height="12.200" viewBox="0 0 14.400 12.200" fill="none" stroke="#4079c1" stroke-width="1" stroke-linecap="round" stroke-linejoin="round"><rect x=".5" y=".5" width="13.400" height="11.200" rx="1.500"/><path d="M.8 1.500h12.800" stroke-width="1.400"/><path d="M3.200 4.600l2.300 2.100-2.300 2.100M6.900 9h3.200"/></svg>
<div class="a td" style="left:190px;top:168px;letter-spacing:.27px">ubuntu-2004-endpoint</div>
<div class="a td" style="left:370px;top:168px;letter-spacing:.17px">Aug 9, 2022 @ 10:16:05.500</div>
<div class="a td" style="left:570px;top:168px;letter-spacing:-0.08px">Bash Shell Profile Modificat...</div>
<div class="a td" style="left:750px;top:168px">low</div>
<div class="a td" style="left:855px;top:168px;width:87px;text-align:right;letter-spacing:.9px">21</div>
<div class="a td" style="left:955px;top:168px;letter-spacing:-.03px">process event with process bash, parent process sshd, by root on ubuntu-2004-endpoint created low alert</div>
</div>
<div class="a" style="left:0;top:985px;width:1338px;height:9px;background:linear-gradient(rgba(248,248,250,.25),rgba(243,243,246,.6))"></div>
<div class="a" style="left:1300.500px;top:792px;width:6px;height:210px;background:#bbbcc0;border-radius:3px"></div>
</body>
</html>
